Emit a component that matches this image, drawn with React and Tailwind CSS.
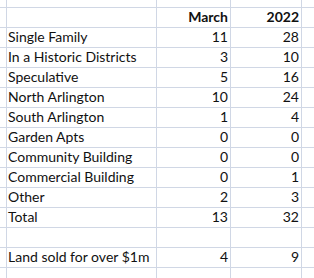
import React from 'react';

const rows = [
  { label: '', march: 'March', year: '2022', bold: true },
  { label: 'Single Family', march: '11', year: '28' },
  { label: 'In a Historic Districts', march: '3', year: '10' },
  { label: 'Speculative', march: '5', year: '16' },
  { label: 'North Arlington', march: '10', year: '24' },
  { label: 'South Arlington', march: '1', year: '4' },
  { label: 'Garden Apts', march: '0', year: '0' },
  { label: 'Community Building', march: '0', year: '0' },
  { label: 'Commercial Building', march: '0', year: '1' },
  { label: 'Other', march: '2', year: '3' },
  { label: 'Total', march: '13', year: '32' },
  { label: '', march: '', year: '' },
  { label: 'Land sold for over $1m', march: '4', year: '9' },
];

const cell = 'border-r border-b border-[#d0d7e5] flex items-end pb-[3px] leading-none';

const App = () => {
  return (
    <div
      className="w-[314px] h-[278px] overflow-hidden bg-white text-[#111] text-[14px]"
      style={{ fontFamily: 'Lato, "Liberation Sans", sans-serif' }}
    >
      <div className="flex h-[8px]">
        <div className="w-[7px] shrink-0 border-r border-b border-[#d0d7e5]" />
        <div className="w-[150px] shrink-0 border-r border-b border-[#d0d7e5]" />
        <div className="w-[74px] shrink-0 border-r border-b border-[#d0d7e5]" />
        <div className="w-[71px] shrink-0 border-r border-b border-[#d0d7e5]" />
        <div className="flex-1 border-b border-[#d0d7e5]" />
      </div>
      {rows.map((r, i) => (
        <div key={i} className={`flex h-[20px] ${r.bold ? 'font-bold' : ''}`}>
          <div className={`w-[7px] shrink-0 ${cell}`} />
          <div className={`w-[150px] shrink-0 pl-[1px] ${cell}`}>{r.label}</div>
          <div className={`w-[74px] shrink-0 justify-end pr-[2px] ${cell}`}>{r.march}</div>
          <div className={`w-[71px] shrink-0 justify-end pr-[2px] ${cell}`}>{r.year}</div>
          <div className="flex-1 border-b border-[#d0d7e5]" />
        </div>
      ))}
      <div className="flex h-[10px]">
        <div className="w-[7px] shrink-0 border-r border-[#d0d7e5]" />
        <div className="w-[150px] shrink-0 border-r border-[#d0d7e5]" />
        <div className="w-[74px] shrink-0 border-r border-[#d0d7e5]" />
        <div className="w-[71px] shrink-0 border-r border-[#d0d7e5]" />
        <div className="flex-1" />
      </div>
    </div>
  );
};

export default App;
